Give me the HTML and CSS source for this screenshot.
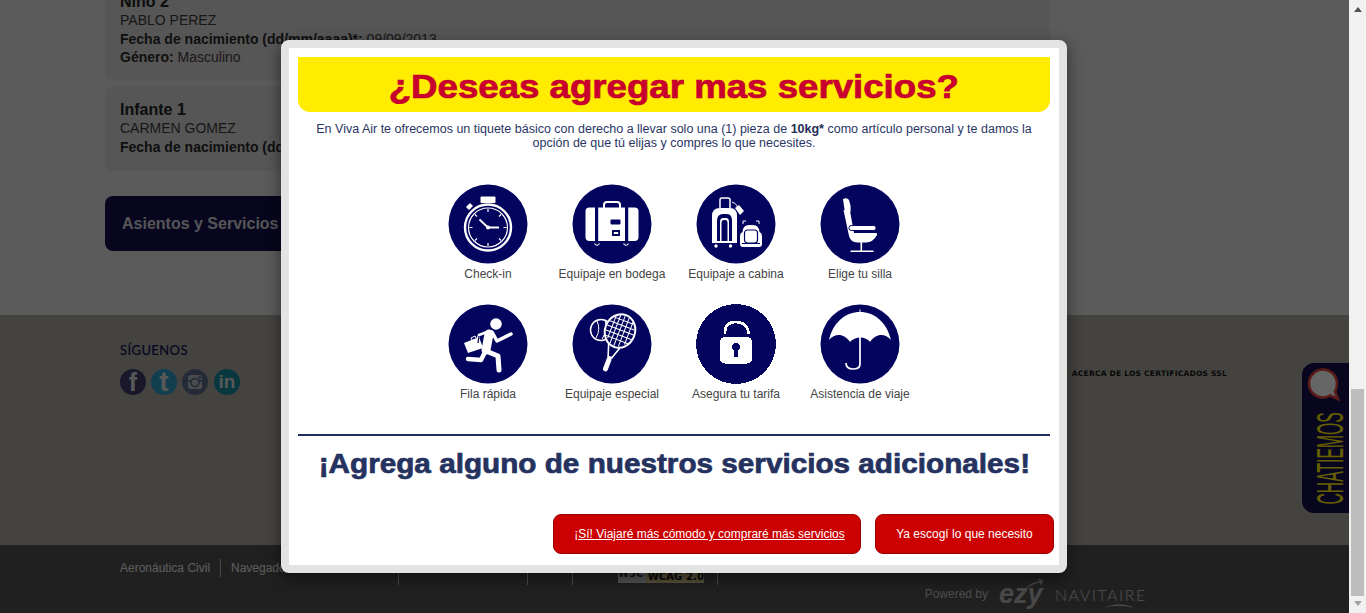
FILE: index.html
```html
<!DOCTYPE html>
<html lang="es">
<head>
<meta charset="utf-8">
<title>Viva Air</title>
<link rel="stylesheet" href="styles.css">
</head>
<body>
<div class="app">
  <div class="viewport">
    <div class="page">
      <main class="main">
        <section class="card card-first">
          <h3 class="card-title">Niño 2</h3>
          <p class="line">PABLO PEREZ</p>
          <p class="line"><b>Fecha de nacimiento (dd/mm/aaaa)*:</b> 09/09/2013</p>
          <p class="line"><b>Género:</b> <span class="soft">Masculino</span></p>
        </section>
        <section class="card">
          <h3 class="card-title">Infante 1</h3>
          <p class="line">CARMEN GOMEZ</p>
          <p class="line"><b>Fecha de nacimiento (dd/mm/aaaa)*:</b> 10/10/2017</p>
        </section>
        <div class="step">Asientos y Servicios</div>
      </main>
      <footer class="band">
        <div class="follow">
          <h4 class="follow-title">SÍGUENOS</h4>
          <div class="social">
            <span class="soc soc-f">f</span>
            <span class="soc soc-t">t</span>
            <svg class="soc-svg" viewBox="0 0 26 26"><circle cx="13" cy="13" r="13" fill="#5c6a8a"/><rect x="6" y="6" width="14" height="14" rx="2.5" fill="#b9bcc0"/><rect x="6" y="11" width="14" height="1.6" fill="#5c6a8a"/><circle cx="13" cy="13.5" r="4" fill="#b9bcc0" stroke="#5c6a8a" stroke-width="1.6"/><rect x="16.5" y="7.2" width="2.5" height="2.5" fill="#5c6a8a"/></svg>
            <span class="soc soc-in">in</span>
          </div>
        </div>
        <a class="ssl">ACERCA DE LOS CERTIFICADOS SSL</a>
      </footer>
      <footer class="bottom">
        <nav class="links">
          <a class="link link-a">Aeronáutica Civil</a>
          <a class="link link-b">Navegador recomendado</a>
          <a class="link link-c">Términos</a>
          <a class="link link-d">Inicio</a>
          <span class="link link-e"><span class="badge"><span class="badge-l">W3C</span><span class="badge-r">WCAG 2.0</span></span></span>
        </nav>
        <div class="powered">
          <span class="powered-by">Powered by</span>
          <span class="ezy">ezy<svg class="ezy-arrow" viewBox="0 0 24 14"><path d="M1 13C7 6 13 3 20 3L17 0L24 1L22 8L20 4C14 5 8 8 1 13Z" fill="currentColor"/></svg></span>
          <span class="navitaire">NAVITAIRE<svg class="nav-swoosh" viewBox="0 0 32 6"><path d="M1 5C9 1 21 0 31 5C21 2 10 2 1 5Z" fill="currentColor"/></svg></span>
        </div>
      </footer>
    </div>
    <aside class="chat">
      <svg class="chat-svg" viewBox="0 0 47 150">
        <path d="M21 6.500C13.500 6.500 7 12.500 7 20.500C7 28.500 13.500 34.500 21 34.500C24 34.500 26 33.700 28 32.500L36 36L33 28.500C34.300 26.500 35 23.500 35 20.500C35 12.500 28.500 6.500 21 6.500Z" fill="#ffffff" stroke="#e2453e" stroke-width="2.600"/>
        <text class="chat-text" transform="translate(40.500 141.500) rotate(-90) scale(.425 1)">CHATIEMOS</text>
      </svg>
    </aside>
    <div class="overlay">
      <div class="modal">
        <h1 class="banner"><span class="wide">¿Deseas agregar mas servicios?</span></h1>
        <p class="intro">En Viva Air te ofrecemos un tiquete básico con derecho a llevar solo una (1) pieza de <b>10kg*</b> como artículo personal y te damos la opción de que tú elijas y compres lo que necesites.</p>
        <div class="grid">
          <div class="item">
            <svg class="ico" viewBox="-40 -40 80 80">
              <circle r="39.5" fill="#03045e"/>
              <rect x="-7.500" y="-27.500" width="15" height="6.500" rx="1" fill="#fff"/>
              <path d="M-19 -14L-15 -18L-18 -21L-22 -17Z" fill="#fff"/>
              <g fill="none" stroke="#fff">
                <circle cx="0" cy="3.5" r="23" stroke-width="2.400"/>
                <circle cx="0" cy="3.5" r="19.500" stroke-width="1.200"/>
                <path d="M0 -15V-12M0 19V22M-18.500 3.500H-15.500M15.500 3.500H18.500M-13 -9.500L-11 -7.500M13 -9.500L11 -7.500M-13 16.500L-11 14.500M13 16.500L11 14.500" stroke-width="1.200"/>
                <path d="M-8.500 -4.500L0 3.500L11 3.500" stroke-width="1.800"/>
              </g>
              <circle cx="0" cy="3.500" r="2" fill="#fff"/>
            </svg>
            <span class="lbl">Check-in</span>
          </div>
          <div class="item">
            <svg class="ico" viewBox="-40 -40 80 80">
              <circle r="39.5" fill="#03045e"/>
              <rect x="-26.500" y="-16.500" width="53" height="33.500" rx="4" fill="#fff"/>
              <path d="M-8 -16V-19Q-8 -22 -5 -22H5Q8 -22 8 -19V-16" fill="none" stroke="#fff" stroke-width="2"/>
              <rect x="-17" y="-17" width="3.200" height="35" fill="#03045e"/>
              <rect x="13" y="-17" width="3.200" height="35" fill="#03045e"/>
              <rect x="-1.500" y="-4.500" width="10" height="5" rx="1" fill="#03045e"/>
              <rect x="0" y="6" width="8" height="6" fill="#03045e"/>
              <rect x="1.800" y="8" width="4.400" height="2" fill="#fff"/>
              <path d="M-17.500 19.500Q-15 23 -12.500 19.500M11.500 19.500Q14 23 16.500 19.500" fill="none" stroke="#fff" stroke-width="1.200"/>
            </svg>
            <span class="lbl">Equipaje en bodega</span>
          </div>
          <div class="item">
            <svg class="ico" viewBox="-40 -40 80 80">
              <circle r="39.5" fill="#03045e"/>
              <path d="M-24 19V-8Q-24 -16 -16 -16H-6Q1 -16 1 -8V19Z" fill="#fff"/>
              <path d="M-19 17V-3Q-19 -10 -13 -10H-9Q-4 -10 -4 -3V17Z" fill="#03045e"/>
              <path d="M-16 17V-2Q-16 -6 -13 -6H-10Q-7 -6 -7 -2V17Z" fill="#fff"/>
              <path d="M-14.500 17V-1Q-14.500 -4 -12 -4H-11Q-8.500 -4 -8.500 -1V17Z" fill="#03045e"/>
              <path d="M-16 -16V-24Q-16 -26 -14 -26H-8Q-6 -26 -6 -24V-16" fill="none" stroke="#fff" stroke-width="1.500"/>
              <path d="M-4 -22Q2 -20 2 -14" fill="none" stroke="#fff" stroke-width="1"/>
              <path d="M-1 -16L3 -19L8 -13L4 -9Z" fill="#fff"/>
              <circle cx="-20" cy="22" r="1.700" fill="#fff"/>
              <circle cx="-5.500" cy="22" r="1.700" fill="#fff"/>
              <path d="M7 0V-3H10M20 -3H23V0" fill="none" stroke="#fff" stroke-width="1"/>
              <path d="M7 23Q4 23 4 20V12Q4 9 6.500 8Q7 1 13 1H17Q23 1 23.500 8Q26 9 26 12V20Q26 23 23 23Z" fill="#fff"/>
              <rect x="8.500" y="6" width="13" height="13" rx="3" fill="#fff" stroke="#03045e" stroke-width="1.200"/>
              <path d="M6 19.500H24" stroke="#03045e" stroke-width="1"/>
            </svg>
            <span class="lbl">Equipaje a cabina</span>
          </div>
          <div class="item">
            <svg class="ico" viewBox="-40 -40 80 80">
              <circle r="39.5" fill="#03045e"/>
              <path d="M-17 -25Q-13 -27 -11 -24Q-8.500 -18 -9.500 -12L-15 -11Z" fill="#fff"/>
              <path d="M-16.500 -14L-10 -13L-6 9L16 9Q17.500 9 17 11Q13 18.500 6 18.500H-3Q-9 18.500 -11 12Z" fill="#fff"/>
              <rect x="-11" y="1.500" width="27" height="5" rx="2.200" fill="#fff" stroke="#03045e" stroke-width="1"/>
              <rect x="0.500" y="18" width="1.600" height="9" fill="#fff"/>
              <rect x="-9.500" y="26.500" width="23" height="1.500" fill="#fff"/>
            </svg>
            <span class="lbl">Elige tu silla</span>
          </div>
          <div class="item">
            <svg class="ico" viewBox="-40 -40 80 80">
              <circle r="39.5" fill="#03045e"/>
              <circle cx="8" cy="-20" r="5.800" fill="#fff"/>
              <g fill="none" stroke="#fff" stroke-linecap="round" stroke-linejoin="round">
                <path d="M1 -10L-2 6" stroke-width="9"/>
                <path d="M4 -12L9 -3L23 -10" stroke-width="3.500"/>
                <path d="M-2 7L10 12L11 26" stroke-width="5"/>
                <path d="M-3 8L-7 16L-20 15" stroke-width="4.500"/>
                <path d="M-1 -12L-9 -9L-11 -2" stroke-width="2.500"/>
              </g>
              <path d="M-24 -1L-9 -7L-5 4L-20 9Z" fill="#fff"/>
              <path d="M-16 -4L-17 -6L-13 -8L-12 -6" fill="none" stroke="#fff"/>
              <path d="M-9 -8L-10 -1" stroke="#03045e" stroke-width="1.200"/>
            </svg>
            <span class="lbl">Fila rápida</span>
          </div>
          <div class="item">
            <svg class="ico" viewBox="-40 -40 80 80">
              <circle r="39.5" fill="#03045e"/>
              <circle cx="-11" cy="-14" r="10.500" fill="#03045e" stroke="#fff" stroke-width="1.500"/>
              <path d="M-15 -23Q-11 -15 -16 -6M-7 -24Q-4 -14 -10 -5" fill="none" stroke="#fff" stroke-width="1"/>
              <g transform="rotate(21 8 -13)">
                <ellipse cx="8" cy="-13" rx="15" ry="17" fill="#03045e" stroke="#fff" stroke-width="2"/>
                <path d="M-2 -24H18M-5 -19H21M-6 -14H22M-6 -9H22M-4 -4H20M-1 -26V-2M3 -29V2M7.500 -29V3M12 -29V2M17 -26V-2" stroke="#fff" stroke-width="1" fill="none"/>
                <path d="M2 3L6 15H10L14 3" fill="none" stroke="#fff" stroke-width="1.600"/>
                <rect x="5.500" y="15" width="5" height="15" rx="2.200" fill="#fff"/>
              </g>
            </svg>
            <span class="lbl">Equipaje especial</span>
          </div>
          <div class="item">
            <svg class="ico ico-crisp" viewBox="-40 -40 80 80">
              <circle r="40" fill="#03045e"/>
              <path d="M-11 -10V-12Q-11 -22 0 -22Q11 -22 13 -10" fill="none" stroke="#fff" stroke-width="2.600"/>
              <rect x="-16" y="-7" width="32" height="26.500" rx="5" fill="#fff"/>
              <circle cx="0" cy="3" r="4" fill="#03045e"/>
              <path d="M-1.500 4H1.500L2 13H-2Z" fill="#03045e"/>
            </svg>
            <span class="lbl">Asegura tu tarifa</span>
          </div>
          <div class="item">
            <svg class="ico" viewBox="-40 -40 80 80">
              <circle r="39.5" fill="#03045e"/>
              <path d="M-0.500 -34.500V-32H0.500V-34.500Z" fill="#fff"/>
              <path d="M-31 -4C-27 -22 -14 -32 0 -32C14 -32 27 -22 31 -4C25 -11 16 -11 10 -2C6 -8 -5 -8 -10 -2C-16 -11 -25 -11 -31 -4Z" fill="#fff"/>
              <path d="M0 -8V20Q0 25 -7 25Q-14 25 -14 19" fill="none" stroke="#fff" stroke-width="1.700"/>
            </svg>
            <span class="lbl">Asistencia de viaje</span>
          </div>
        </div>
        <hr class="rule">
        <h2 class="cta"><span class="wide">¡Agrega alguno de nuestros servicios adicionales!</span></h2>
        <div class="actions">
          <a class="btn btn-more">¡Sí! Viajaré más cómodo y compraré más servicios</a>
          <a class="btn btn-done">Ya escogí lo que necesito</a>
        </div>
      </div>
    </div>
  </div>
  <div class="scrollbar"><div class="arrow-up"></div><div class="thumb"></div><div class="arrow"></div></div>
</div>
</body>
</html>
```
FILE: styles.css
```css
* { box-sizing: border-box; }
html, body { margin: 0; height: 100%; overflow: hidden; }
body { font-family: "Liberation Sans", Arial, sans-serif; color: #222; }
.app { display: flex; height: 613px; }
.viewport { position: relative; width: 1349px; height: 613px; overflow: hidden; background: #e4e4e4; }
.page { margin-top: -15px; }
.main { height: 330px; padding-left: 105px; width: 1050px; }
.card { background: #d8d8d8; border-radius: 8px; padding: 15px; height: 85px; margin-bottom: 25px; }
.card-first { height: 95px; margin-bottom: 6px; padding-top: 8px; }
.card-title { margin: 0; font-size: 16px; line-height: 18px; font-weight: bold; color: #222; }
.line { margin: 0; font-size: 14px; line-height: 18.500px; color: #3a3a3a; }
.line b { color: #2a2a2a; }
.soft { color: #4a3a3a; }
.step { width: 400px; height: 55px; background: #14114c; border-radius: 8px; color: #d4d4dc; font-weight: bold; font-size: 16px; line-height: 55px; padding-left: 17px; }
.band { height: 230px; background: #aba7a0; display: flex; justify-content: space-between; padding: 0 122px 0 120px; }
.follow { padding-top: 28px; }
.follow-title { margin: 0 0 12px; font-family: "Lato", sans-serif; font-size: 13px; line-height: 14px; font-weight: 400; letter-spacing: .4px; color: #0f0f55; -webkit-text-stroke: .2px #0f0f55; }
.social { display: flex; gap: 5px; }
.soc { width: 26px; height: 26px; border-radius: 50%; display: flex; align-items: center; justify-content: center; color: #ddd; font-weight: bold; font-size: 22px; line-height: 26px; }
.soc-svg { width: 26px; height: 26px; display: block; }
.soc-f { background: #3d3c6a; font-size: 25px; }
.soc-t { background: #2b9ec6; font-size: 28px; }
.soc-in { background: #17899f; font-size: 19px; margin-left: 1px; }
.ssl { padding-top: 54px; font-family: "DejaVu Sans", sans-serif; font-size: 7.500px; line-height: 10px; font-weight: bold; letter-spacing: .24px; color: #111; }
.bottom { height: 68px; background: #535250; position: relative; }
.links { display: flex; padding: 14px 0 0 120px; height: 46px; }
.link { height: 18px; font-size: 12px; line-height: 18px; color: #e6e6e6; border-right: 1px solid #bbb; padding-right: 10px; margin-right: 10px; white-space: nowrap; overflow: hidden; }
.link-a { width: 101px; }
.link-b { width: 168px; height: 26px; }
.link-c { width: 119px; height: 26px; }
.link-d { width: 35px; height: 26px; }
.link-e { width: 135px; height: 26px; margin: 0; padding: 0 0 0 35px; }
.badge { display: flex; width: 86px; height: 24px; font-family: "DejaVu Sans", sans-serif; font-size: 10px; font-weight: bold; }
.badge-l { width: 31px; background: #cfcfcf; color: #333; padding-top: 6px; }
.badge-r { flex: 1; background: #d8c68c; color: #111; padding: 11px 0 0 2px; line-height: 13px; letter-spacing: .1px; white-space: nowrap; }
.powered { display: flex; justify-content: flex-end; align-items: center; padding-right: 202px; margin-top: -10px; height: 26px; }
.powered-by { font-size: 12px; color: #bdbdbd; margin-right: 11px; }
.ezy { position: relative; font-weight: bold; font-style: italic; font-size: 27px; line-height: 26px; color: #b4b4b4; width: 44px; margin-right: 12px; }
.ezy-arrow { position: absolute; right: 0; top: -2px; width: 20px; height: 12px; }
.navitaire { position: relative; font-family: "Lato", sans-serif; font-weight: 300; font-size: 16px; letter-spacing: 1.500px; color: #c8c8c8; width: 92px; white-space: nowrap; }
.nav-swoosh { position: absolute; left: 48px; top: 18px; width: 32px; height: 6px; }
.chat { position: absolute; right: 0; top: 363px; width: 47px; height: 150px; background: #14114c; border-radius: 12px 0 0 12px; }
.chat-svg { display: block; width: 47px; height: 150px; }
.chat-text { font-family: "Liberation Sans", sans-serif; font-size: 37px; fill: #ffec00; }
.overlay { position: absolute; inset: 0; background: rgba(0, 0, 0, .6); }
.modal { margin: 40px 0 0 281px; width: 786px; height: 533px; background: #fff; border: 8px solid #e3e3e3; border-radius: 8px; box-shadow: 0 5px 15px rgba(0, 0, 0, .5); padding: 9px 9px 0; display: flex; flex-direction: column; }
.wide { display: inline-block; transform: scaleX(1.11); white-space: nowrap; -webkit-text-stroke: .7px currentColor; }
.banner { margin: 0; height: 55px; flex: none; background: #ffec00; border-radius: 0 0 12px 12px; color: #c8002d; font-size: 33px; line-height: 60px; text-align: center; }
.intro { margin: 10px 0 0; padding: 0 14px; font-size: 12.500px; line-height: 14px; text-align: center; color: #2a3565; }
.intro b { color: #222b55; }
.grid { display: grid; grid-template-columns: repeat(4, 124px); justify-content: center; grid-auto-rows: 120px; margin-top: 34px; }
.item { display: flex; flex-direction: column; align-items: center; }
.ico { width: 80px; height: 80px; display: block; }
.ico-crisp { shape-rendering: crispEdges; }
.lbl { margin-top: 1px; font-size: 12px; line-height: 18px; color: #444; white-space: nowrap; }
.rule { flex: none; width: 100%; height: 2px; margin: 10px 0 0; border: 0; background: #1f2c5f; }
.cta { margin: 12px 0 0; font-size: 27px; line-height: 32px; text-align: center; color: #25325f; }
.cta .wide { transform: scaleX(1.1); }
.actions { display: flex; justify-content: flex-end; gap: 14px; margin-top: 34px; margin-right: -4px; }
.btn { height: 40px; display: flex; align-items: center; justify-content: center; background: #cc0000; border: 1px solid #990000; border-radius: 8px; color: #fff; font-size: 12px; }
.btn-more { width: 308px; padding-left: 5px; text-decoration: underline; }
.btn-done { width: 179px; }
.scrollbar { position: relative; width: 17px; height: 613px; background: #f1f1f1; }
.arrow-up { position: absolute; left: 5px; top: 7px; border: 4px solid transparent; border-bottom: 5px solid #505050; border-top: 0; }
.thumb { position: absolute; left: 2px; top: 389px; width: 13px; height: 207px; background: #bdbdbd; }
.arrow { position: absolute; left: 5px; top: 601px; border: 4px solid transparent; border-top: 5px solid #a3a3a3; border-bottom: 0; }
```
